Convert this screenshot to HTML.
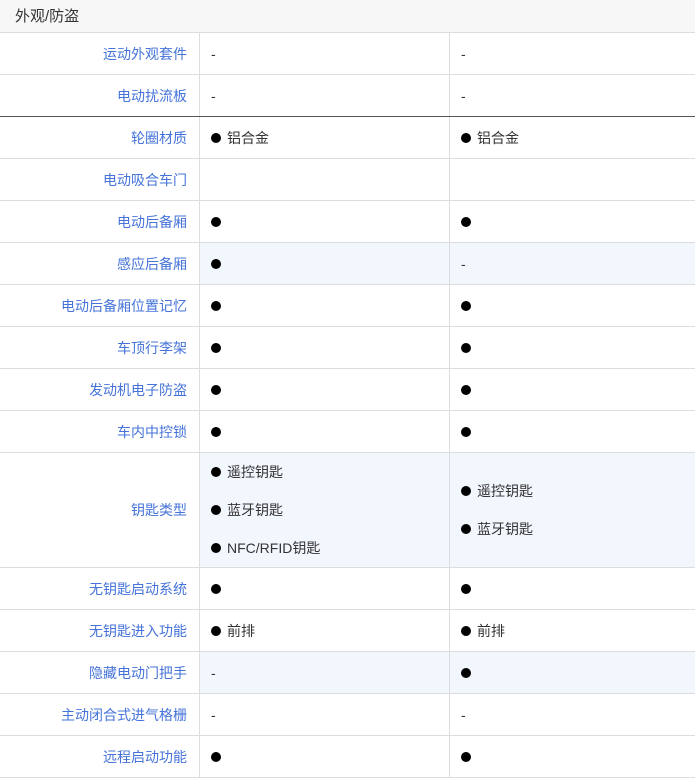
<!DOCTYPE html>
<html><head><meta charset="utf-8"><style>
*{margin:0;padding:0;box-sizing:border-box}
body{width:695px;height:780px;background:#fff;font-family:"Liberation Sans","Noto Sans CJK SC",sans-serif;font-size:14px;color:#333;position:relative;overflow:hidden}
.hd{position:absolute;left:0;top:0;width:695px;height:33px;background:#f7f7f7;border-bottom:1px solid #ddd;font-size:15px;color:#333;padding-left:15px;line-height:33px}
.r{position:absolute;left:0;width:695px;border-bottom:1px solid #ddd}
.c{position:absolute;top:0;bottom:0;display:flex;align-items:center}
.l{left:0;width:200px;justify-content:flex-end;padding-right:12px;color:#4573d9;border-right:1px solid #ddd;background:#fff}
.a{left:200px;width:250px;padding-left:11px;border-right:1px solid #ddd}
.b{left:450px;width:245px;padding-left:11px}
.bl .a,.bl .b{background:#f2f6fd}
.d{display:inline-block;width:10px;height:10px;border-radius:50%;background:#000;margin-right:6px}
.m{flex-direction:column;align-items:flex-start;justify-content:center}
.m div{display:flex;align-items:center}
</style></head><body>
<div class="hd">外观/防盗</div>
<div class="r" style="top:33px;height:42px"><div class="c l">运动外观套件</div><div class="c a">-</div><div class="c b">-</div></div>
<div class="r" style="top:75px;height:42px;border-bottom:1px solid #555"><div class="c l">电动扰流板</div><div class="c a">-</div><div class="c b">-</div></div>
<div class="r" style="top:117px;height:42px"><div class="c l">轮圈材质</div><div class="c a"><span class="d"></span>铝合金</div><div class="c b"><span class="d"></span>铝合金</div></div>
<div class="r" style="top:159px;height:42px"><div class="c l">电动吸合车门</div><div class="c a"></div><div class="c b"></div></div>
<div class="r" style="top:201px;height:42px"><div class="c l">电动后备厢</div><div class="c a"><span class="d"></span></div><div class="c b"><span class="d"></span></div></div>
<div class="r bl" style="top:243px;height:42px"><div class="c l">感应后备厢</div><div class="c a"><span class="d"></span></div><div class="c b">-</div></div>
<div class="r" style="top:285px;height:42px"><div class="c l">电动后备厢位置记忆</div><div class="c a"><span class="d"></span></div><div class="c b"><span class="d"></span></div></div>
<div class="r" style="top:327px;height:42px"><div class="c l">车顶行李架</div><div class="c a"><span class="d"></span></div><div class="c b"><span class="d"></span></div></div>
<div class="r" style="top:369px;height:42px"><div class="c l">发动机电子防盗</div><div class="c a"><span class="d"></span></div><div class="c b"><span class="d"></span></div></div>
<div class="r" style="top:411px;height:42px"><div class="c l">车内中控锁</div><div class="c a"><span class="d"></span></div><div class="c b"><span class="d"></span></div></div>
<div class="r bl" style="top:453px;height:115px"><div class="c l">钥匙类型</div>
<div class="c a m"><div style="height:38px"><span class="d"></span>遥控钥匙</div><div style="height:38px"><span class="d"></span>蓝牙钥匙</div><div style="height:38px"><span class="d"></span>NFC/RFID钥匙</div></div>
<div class="c b m"><div style="height:38px"><span class="d"></span>遥控钥匙</div><div style="height:38px"><span class="d"></span>蓝牙钥匙</div></div></div>
<div class="r" style="top:568px;height:42px"><div class="c l">无钥匙启动系统</div><div class="c a"><span class="d"></span></div><div class="c b"><span class="d"></span></div></div>
<div class="r" style="top:610px;height:42px"><div class="c l">无钥匙进入功能</div><div class="c a"><span class="d"></span>前排</div><div class="c b"><span class="d"></span>前排</div></div>
<div class="r bl" style="top:652px;height:42px"><div class="c l">隐藏电动门把手</div><div class="c a">-</div><div class="c b"><span class="d"></span></div></div>
<div class="r" style="top:694px;height:42px"><div class="c l">主动闭合式进气格栅</div><div class="c a">-</div><div class="c b">-</div></div>
<div class="r" style="top:736px;height:42px"><div class="c l">远程启动功能</div><div class="c a"><span class="d"></span></div><div class="c b"><span class="d"></span></div></div>
</body></html>
